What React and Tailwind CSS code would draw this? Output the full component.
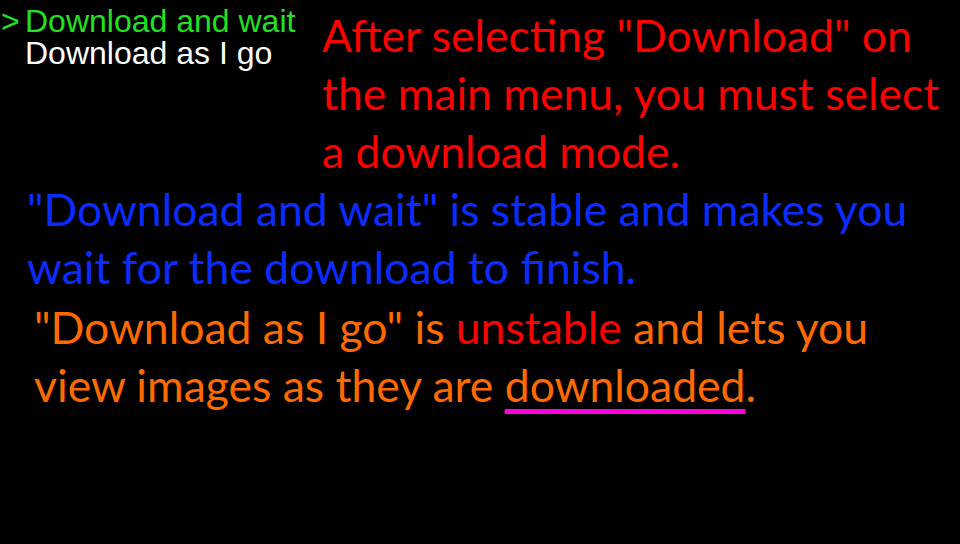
import React from "react";

const calibriLike = { fontFamily: '"Lato", "Noto Sans", sans-serif' };

export default function App() {
  return (
    <div className="w-[960px] h-[544px] bg-black overflow-hidden">
      {/* Top row: menu + red explanation */}
      <div className="flex items-start">
        <div
          className="w-[322px] pt-[5px] text-[32px] leading-8 whitespace-nowrap"
          style={{ fontFamily: '"Liberation Sans", Arial, sans-serif' }}
        >
          <div className="flex text-[#22e022]">
            <span className="w-[25px] pl-[1px]">&gt;</span>
            <span>Download and wait</span>
          </div>
          <div className="pl-[25px] text-white">Download as I go</div>
        </div>
        <p
          className="mt-[6px] text-[44.5px] leading-[58px] text-[#ff0000] whitespace-nowrap"
          style={calibriLike}
        >
          After selecting "Download" on
          <br />
          the main menu, you must select
          <br />
          a download mode.
        </p>
      </div>

      {/* Blue block */}
      <p
        className="pl-[27px] text-[44.5px] leading-[58px] text-[#0a2cff] whitespace-nowrap"
        style={calibriLike}
      >
        "Download and wait" is stable and makes you
        <br />
        wait for the download to finish.
      </p>

      {/* Orange block */}
      <p
        className="mt-[2px] pl-[34px] text-[44.5px] leading-[58px] text-[#ff6a00] whitespace-nowrap"
        style={calibriLike}
      >
        "Download as I go" is <span className="text-[#ff0000]">unstable</span> and lets you
        <br />
        view images as they are{" "}
        <span className="underline decoration-[#ff00dd] decoration-[5px] underline-offset-[7px]">
          downloaded
        </span>
        .
      </p>
    </div>
  );
}
